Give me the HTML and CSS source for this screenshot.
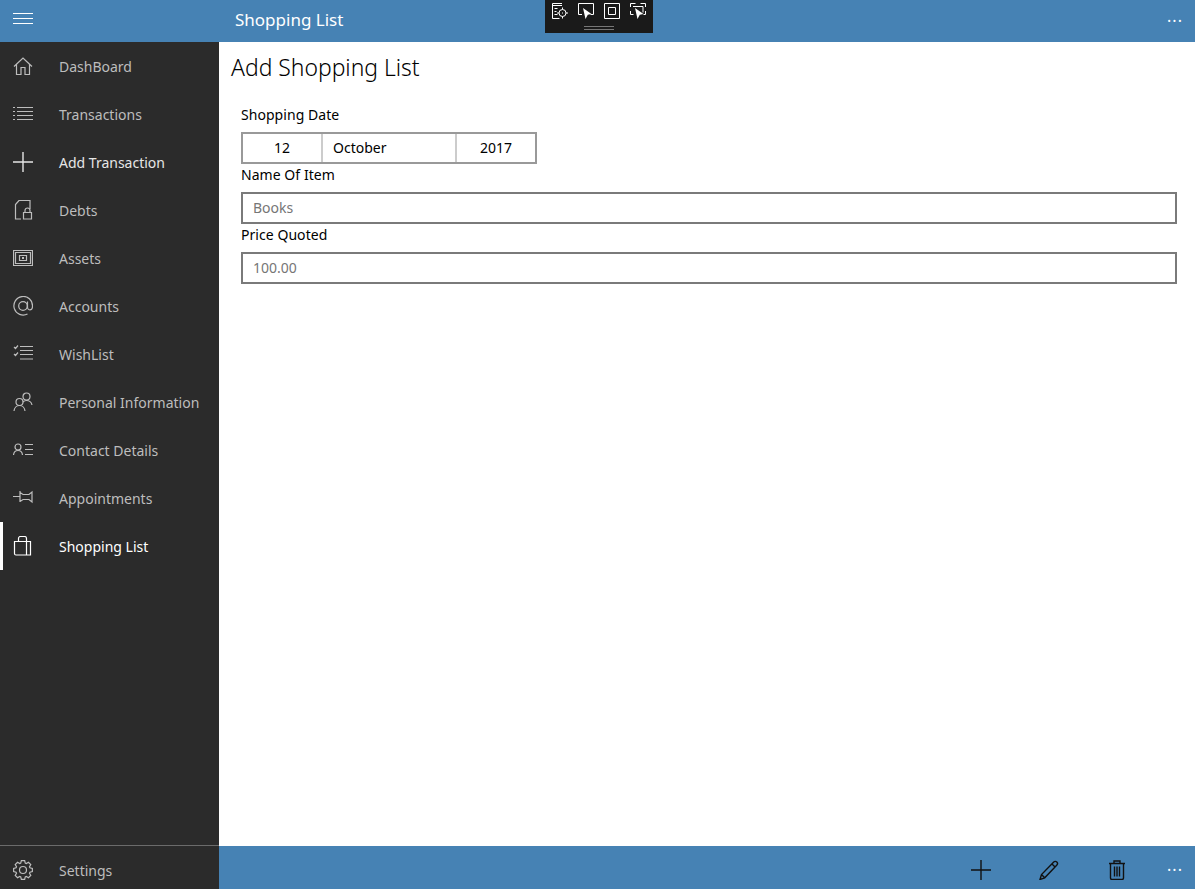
FILE: index.html
```html
<!DOCTYPE html>
<html lang="en">
<head>
<meta charset="utf-8">
<title>Shopping List</title>
<link rel="stylesheet" href="styles.css">
</head>
<body>
<div class="app">
  <header class="topbar">
    <div class="brand">
      <button class="menu-btn" aria-label="Menu">
        <svg class="icon" width="20" height="20" viewBox="0 0 20 20"><path d="M0 4.500h20M0 9.500h20M0 14.500h20"/></svg>
      </button>
    </div>
    <div class="page-title">Shopping List</div>
    <div class="more">···</div>
  </header>

  <div class="debug-bar">
    <div class="debug-icons">
      <svg width="16" height="16" viewBox="0 0 16 16"><path d="M.5.500h9.500M.5 2.500h9.500M.5.500v15h7M2.500 5.500h3M2.500 8.500h2M2.500 11.500h3"/><circle cx="10.500" cy="10" r="3.500"/><path d="M10.500 4.500v2M10.500 13.500v2M5 10h2M14 10h2M10 10h1"/></svg>
      <svg width="16" height="16" viewBox="0 0 16 16"><path d="M4 11.500H.5V.5h15v11h-3"/><path class="solid" d="M5 5l8.500 6-3.700.8L7.500 16z"/></svg>
      <svg width="16" height="16" viewBox="0 0 16 16"><path d="M.5.500h15v15H.5zM4.500 4.500h7v7h-7z"/></svg>
      <svg width="16" height="16" viewBox="0 0 16 16"><path d="M.5 4V.5h5M10.500.5h5V4M.5 8v3.500h3M15.500 8v3.500h-2M3 3.500h10v6"/><path class="solid" d="M5 5l8.500 6-3.700.8L7.500 16z"/></svg>
    </div>
    <div class="debug-grip"></div>
  </div>

  <nav class="sidebar">
    <ul class="nav-list">
      <li class="nav-item">
        <svg class="icon" width="20" height="20" viewBox="0 0 20 20"><path d="M1 10.500L10 2l9 8.500M3.500 8v10.500h4.500v-7h4v7h4.500V8"/></svg>
        <span>DashBoard</span>
      </li>
      <li class="nav-item">
        <svg class="icon" width="20" height="20" viewBox="0 0 20 20"><path d="M4 3.500h16M4 7.500h16M4 11.500h16M4 15.500h16M0 3.500h2M0 7.500h2M0 11.500h2M0 15.500h2"/></svg>
        <span>Transactions</span>
      </li>
      <li class="nav-item nav-bright">
        <svg class="icon" width="20" height="20" viewBox="0 0 20 20"><path d="M0 10h20M10 0v20"/></svg>
        <span>Add Transaction</span>
      </li>
      <li class="nav-item">
        <svg class="icon" width="20" height="20" viewBox="0 0 20 20"><path d="M8 19H2.500V4.500L6 .5h11V9"/><path d="M10.500 12.500h8v6.500h-8zM12 12.500v-2a2.500 2.500 0 0 1 5 0v2"/></svg>
        <span>Debts</span>
      </li>
      <li class="nav-item">
        <svg class="icon" width="20" height="20" viewBox="0 0 20 20"><path d="M.5 2.500h19v15H.5zM2.500 4.500h15v11h-15zM6.500 7.500h7v5h-7z"/><path class="thick" d="M9 10h2"/></svg>
        <span>Assets</span>
      </li>
      <li class="nav-item">
        <svg class="icon" width="20" height="20" viewBox="0 0 20 20"><path d="M14.500 18a9.300 9.300 0 1 1 5-8c0 2.500-1.200 3.800-2.700 3.800s-2.300-1.200-2.300-2.800V5.500"/><circle cx="10" cy="10" r="4.300"/></svg>
        <span>Accounts</span>
      </li>
      <li class="nav-item">
        <svg class="icon" width="20" height="20" viewBox="0 0 20 20"><path d="M7 2.500h13M7 6.500h13M7 10.500h13M7 15h13M1 3l1.500 1.500L5 1.500M1 10l1.500 1.500L5 8.500"/></svg>
        <span>WishList</span>
      </li>
      <li class="nav-item">
        <svg class="icon" width="20" height="20" viewBox="0 0 20 20"><circle cx="13.500" cy="4.500" r="3.500"/><path d="M10 10c1-1 2-1.500 3.500-1.500 2.500 0 5 2 5.500 4.500"/><circle cx="6.500" cy="10" r="3.500"/><path d="M1 19c.3-3 2.500-5.500 5.500-5.500S11.700 16 12 19"/></svg>
        <span>Personal Information</span>
      </li>
      <li class="nav-item">
        <svg class="icon" width="20" height="20" viewBox="0 0 20 20"><circle cx="5" cy="7" r="3"/><path d="M.5 15c.3-3 1.800-4.500 4.500-4.500s4.200 1.500 4.500 4.500M12 4.500h8M12 9.500h8M12 14.500h8"/></svg>
        <span>Contact Details</span>
      </li>
      <li class="nav-item">
        <svg class="icon" width="20" height="20" viewBox="0 0 20 20"><path d="M0 8.500h7M7 3v11M7 4.500l3 2h6l3-2.500v10l-3-2.500h-6l-3 2"/></svg>
        <span>Appointments</span>
      </li>
      <li class="nav-item nav-active">
        <svg class="icon" width="20" height="20" viewBox="0 0 20 20"><path d="M1.500 5.500h16v13.500H3a1.500 1.500 0 0 1-1.500-1.500zM13.500 5.500V19M5.500 5.500V2.500a2 2 0 0 1 2-2h4a2 2 0 0 1 2 2v3"/></svg>
        <span>Shopping List</span>
      </li>
    </ul>
    <div class="nav-item nav-settings">
      <svg class="icon" width="20" height="20" viewBox="0 0 20 20"><circle cx="10" cy="10" r="3.500"/><path d="M19.360 8.350V11.650L16.940 12.260 16.500 13.310 17.780 15.450 15.450 17.780 13.310 16.500 12.260 16.940 11.650 19.360H8.350L7.740 16.940 6.690 16.500 4.550 17.780 2.220 15.450 3.500 13.310 3.060 12.260.64 11.650V8.350L3.060 7.740 3.500 6.690 2.220 4.550 4.550 2.220 6.690 3.500 7.740 3.060 8.350.64H11.650L12.260 3.060 13.310 3.500 15.450 2.220 17.780 4.550 16.500 6.690 16.940 7.740z"/></svg>
      <span>Settings</span>
    </div>
  </nav>

  <main class="content">
    <h1 class="heading">Add Shopping List</h1>
    <form class="form">
      <label class="field-label field-label-first">Shopping Date</label>
      <div class="date-picker">
        <div class="date-cell date-day">12</div>
        <div class="date-cell date-month">October</div>
        <div class="date-cell date-year">2017</div>
      </div>
      <label class="field-label">Name Of Item</label>
      <input class="text-input" type="text" placeholder="Books">
      <label class="field-label">Price Quoted</label>
      <input class="text-input" type="text" placeholder="100.00">
    </form>
  </main>

  <footer class="bottombar">
    <svg class="cmd" width="20" height="20" viewBox="0 0 20 20"><path d="M0 10h20M10 0v20"/></svg>
    <svg class="cmd" width="20" height="20" viewBox="0 0 20 20"><path d="M1 19.500l1.500-5L14.500 2.200c1-1 2.500-1 3.300-.2s.9 2.300-.1 3.300L5.700 17.800zM2.500 14.500l3.200 3.300M13 4l3.300 3.200"/></svg>
    <svg class="cmd" width="20" height="20" viewBox="0 0 20 20"><path d="M2 3.500h16M7 3.500V1h6v2.500M3.500 3.500v14.500a1.500 1.500 0 0 0 1.500 1.500h10a1.500 1.500 0 0 0 1.500-1.500V3.500M7.500 6.500v10M10 6.500v10M12.500 6.500v10"/></svg>
    <div class="more more-bottom">···</div>
  </footer>
</div>
</body>
</html>
```

FILE: styles.css
```css
* { box-sizing: border-box; }
html, body { margin: 0; height: 100%; }
body {
  font-family: "Noto Sans", "Open Sans", "Liberation Sans", sans-serif;
  font-size: 14px;
  background: #fff;
  overflow: hidden;
}
.app {
  position: relative;
  display: grid;
  width: 1195px;
  height: 889px;
  grid-template-columns: 219px 1fr;
  grid-template-rows: 42px 1fr 43px;
}
.topbar {
  grid-column: 1 / -1;
  grid-row: 1;
  display: flex;
  align-items: center;
  background: #4682b4;
  color: #fff;
}
.brand { width: 235px; padding-left: 13px; display: flex; align-items: center; }
.menu-btn { padding: 0; border: 0; background: none; display: flex; position: relative; top: -2px; }
.icon { fill: none; stroke: #bdbdbd; stroke-width: 1.2; flex: none; }
.menu-btn .icon { stroke: #fff; stroke-width: 1; }
.page-title { font-size: 17px; flex: 1; padding-bottom: 3px; }
.more {
  width: 40px;
  text-align: center;
  color: #fff;
  font-size: 16px;
  letter-spacing: 1px;
  line-height: 1;
}
.debug-bar {
  position: absolute;
  left: 545px;
  top: 0;
  width: 108px;
  height: 33px;
  background: #1a1a1a;
  padding: 3px 0 0 7px;
}
.debug-icons { display: flex; gap: 10px; align-items: flex-start; }
.debug-icons svg { fill: none; stroke: #fff; stroke-width: 1; }
.debug-icons .solid { fill: #fff; stroke: none; }
.debug-grip {
  width: 30px;
  height: 4px;
  margin: 7px 0 0 32px;
  border-top: 1px solid #777;
  border-bottom: 1px solid #777;
}
.sidebar {
  grid-column: 1;
  grid-row: 2 / 4;
  background: #2b2b2b;
  display: flex;
  flex-direction: column;
  justify-content: space-between;
}
.nav-list { list-style: none; margin: 0; padding: 0; }
.nav-item {
  height: 48px;
  display: flex;
  align-items: center;
  padding-left: 13px;
  color: #bdbdbd;
  position: relative;
}
.nav-item .icon { margin-right: 26px; }
.nav-bright { color: #e6e6e6; }
.nav-bright .icon { stroke: #e6e6e6; stroke-width: 1.4; }
.thick { stroke-width: 2; }
.nav-active { color: #fff; }
.nav-active .icon { stroke: #fff; }
.nav-active::before {
  content: "";
  position: absolute;
  left: 0;
  top: 0;
  bottom: 0;
  width: 3px;
  background: #fff;
}
.nav-settings { height: 44px; border-top: 1px solid #6b6b6b; padding-top: 5px; }
.content { grid-column: 2; grid-row: 2; padding: 0 18px 0 12px; color: #000; }
.heading {
  margin: 0;
  font-size: 22.9px;
  font-weight: 300;
  line-height: 30px;
  padding-top: 11px;
}
.form { padding-left: 10px; display: flex; flex-direction: column; padding-top: 22px; }
.field-label { font-size: 14px; letter-spacing: .05px; line-height: 20px; height: 20px; margin-bottom: 7px; margin-top: 1px; display: block; }
.field-label-first { margin-top: 0; margin-bottom: 7px; }
.date-picker {
  display: flex;
  width: 296px;
  height: 32px;
  border: 2px solid #999;
}
.date-cell { display: flex; align-items: center; padding-bottom: 2px; }
.date-day { width: 78px; justify-content: center; }
.date-month { width: 136px; padding-left: 10px; border-left: 2px solid #ccc; border-right: 2px solid #ccc; }
.date-year { flex: 1; justify-content: center; }
.text-input {
  width: 936px;
  height: 32px;
  border: 2px solid #7a7a7a;
  padding: 0 10px 2px;
  font: inherit;
  outline: none;
  background: #fff;
}
.text-input::placeholder { color: #767676; opacity: 1; }
.bottombar {
  grid-column: 2;
  grid-row: 3;
  background: #4682b4;
  display: flex;
  align-items: center;
  justify-content: flex-end;
  padding-top: 4px;
}
.cmd { fill: none; stroke: #111; stroke-width: 1.4; margin-right: 48px; }
.cmd:nth-child(3) { margin-right: 28px; }
.more-bottom { width: 40px; }
```
